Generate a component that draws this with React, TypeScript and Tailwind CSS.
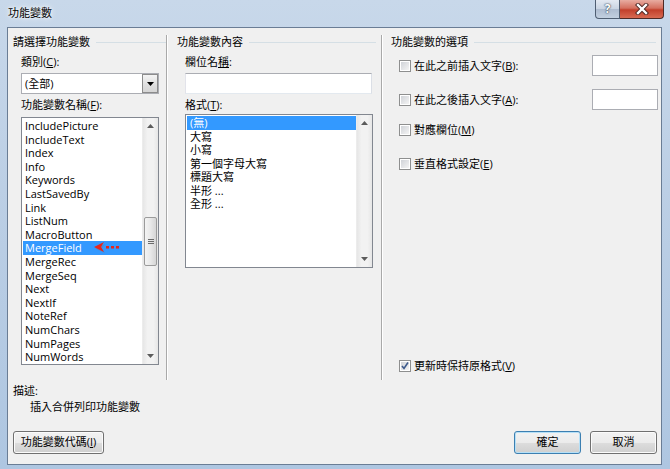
import React from "react";

const fields = [
  "IncludePicture",
  "IncludeText",
  "Index",
  "Info",
  "Keywords",
  "LastSavedBy",
  "Link",
  "ListNum",
  "MacroButton",
  "MergeField",
  "MergeRec",
  "MergeSeq",
  "Next",
  "NextIf",
  "NoteRef",
  "NumChars",
  "NumPages",
  "NumWords",
];

const formats = ["(無)", "大寫", "小寫", "第一個字母大寫", "標題大寫", "半形 ...", "全形 ..."];

function GroupHeader({ title, className = "" }: { title: string; className?: string }) {
  return (
    <div className={`flex items-center h-[14px] leading-[14px] ${className}`}>
      <span>{title}</span>
      <div className="flex-1 h-px bg-[#d5dfe5] ml-[6px]" />
    </div>
  );
}

function Arrow({ up }: { up?: boolean }) {
  return (
    <svg width="7" height="4" viewBox="0 0 7 4">
      <polygon points={up ? "0,4 7,4 3.5,0" : "0,0 7,0 3.5,4"} fill="#5c5c5c" />
    </svg>
  );
}

function ScrollBar({ thumbTop, thumbHeight }: { thumbTop?: number; thumbHeight?: number }) {
  return (
    <div className="w-[16px] h-full flex flex-col bg-[linear-gradient(to_right,#e6e6e6,#f2f2f2_30%,#f2f2f2_70%,#e6e6e6)] border-l border-[#ececec]">
      <div className="h-[16px] flex items-center justify-center">
        <Arrow up />
      </div>
      {thumbTop !== undefined && (
        <>
          <div style={{ height: thumbTop }} />
          <div
            className="mx-[1px] rounded-[2px] border border-[#9b9b9b] bg-[linear-gradient(to_right,#f4f4f4,#e8e8e8_50%,#d6d6d6)] flex flex-col items-center justify-center gap-[1px]"
            style={{ height: thumbHeight }}
          >
            <div className="w-[6px] h-px bg-[#6b6b6b]" />
            <div className="w-[6px] h-px bg-[#6b6b6b]" />
            <div className="w-[6px] h-px bg-[#6b6b6b]" />
          </div>
        </>
      )}
      <div className="flex-1" />
      <div className="h-[16px] flex items-center justify-center">
        <Arrow />
      </div>
    </div>
  );
}

function CheckBox({ checked }: { checked?: boolean }) {
  return (
    <div className="w-[12px] h-[12px] border border-[#8e8f8f] bg-white p-px shrink-0">
      <div className="w-full h-full bg-[linear-gradient(135deg,#d0d3d8,#f4f4f4)] relative">
        {checked && (
          <svg className="absolute -left-px -top-px" width="10" height="10" viewBox="0 0 10 10">
            <path d="M2 5 L4 7.5 L8 1.5" stroke="#3d5a8c" strokeWidth="1.6" fill="none" />
          </svg>
        )}
      </div>
    </div>
  );
}

function Button({ children, width, primary }: { children: React.ReactNode; width: string; primary?: boolean }) {
  return (
    <div
      className={`${width} h-[23px] rounded-[3px] border flex items-center justify-center bg-[linear-gradient(to_bottom,#f2f2f2_0%,#ebebeb_50%,#dddddd_51%,#cfcfcf_100%)] ${
        primary
          ? "border-[#3c7fb1] shadow-[inset_0_0_0_1px_#b6e0f7]"
          : "border-[#707070] shadow-[inset_0_0_0_1px_#fbfbfb]"
      }`}
    >
      {children}
    </div>
  );
}

export default function App() {
  return (
    <div className="w-[670px] h-[469px] overflow-hidden flex flex-col bg-[linear-gradient(to_bottom,#c8d8ea,#bccfe5_40%,#aec6e1)] text-[11px] text-black font-['Open_Sans','Noto_Sans_CJK_TC',sans-serif]">
      {/* Title bar */}
      <div className="h-[27px] flex justify-between shrink-0">
        <div className="pl-[8px] pt-[5px] leading-[16px] [text-shadow:0_0_6px_#fff,0_0_3px_#fff]">功能變數</div>
        <div className="flex pr-[6px]">
          <div className="w-[25px] h-[19px] border border-t-0 border-[#4f5e72] rounded-bl-[4px] bg-[linear-gradient(to_bottom,#e3e9f2,#c9d4e2_50%,#aebcd0_51%,#c2d0e0)] flex items-center justify-center text-white font-bold text-[12px] [text-shadow:0_0_2px_#2c3a4d,0_0_1px_#2c3a4d]">
            ?
          </div>
          <div className="w-[44px] h-[19px] border border-t-0 border-l-0 border-[#4e2a26] rounded-br-[4px] bg-[linear-gradient(to_bottom,#e8aca1,#d4705f_45%,#c2402c_55%,#d86a52)] flex items-center justify-center">
            <svg width="14" height="12" viewBox="0 0 14 12">
              <path d="M3 2 L11 10 M11 2 L3 10" stroke="#4a2420" strokeWidth="4.2" strokeLinecap="square" />
              <path d="M3 2 L11 10 M11 2 L3 10" stroke="#ffffff" strokeWidth="2.4" strokeLinecap="square" />
            </svg>
          </div>
        </div>
      </div>

      {/* Client area */}
      <div className="ml-[7px] mr-[8px] mb-[4px] flex-1 border border-[#6a7d95] bg-[#f0f0f0] flex flex-col">
        <div className="flex h-[352px] pt-[7px]">
          {/* Left column */}
          <div className="w-[158px] flex flex-col pl-[5px]">
            <GroupHeader title="請選擇功能變數" />
            <div className="pl-[8px] flex flex-col">
              <div className="mt-[6px] h-[14px] leading-[14px]">
                類別(<span className="underline">C</span>):
              </div>
              <div className="mt-[4px] w-[138px] h-[21px] border border-[#abadb3] bg-white flex items-center">
                <span className="pl-[3px] flex-1 leading-[14px]">(全部)</span>
                <div className="w-[16px] h-[19px] border border-[#8c8c8c] bg-[linear-gradient(to_bottom,#f4f4f4,#e1e1e1_50%,#d5d5d5)] flex items-center justify-center">
                  <svg width="7" height="4" viewBox="0 0 7 4">
                    <polygon points="0,0 7,0 3.5,4" fill="#000" />
                  </svg>
                </div>
              </div>
              <div className="mt-[4px] h-[14px] leading-[14px]">
                功能變數名稱(<span className="underline">F</span>):
              </div>
              <div className="mt-[5px] w-[138px] h-[248px] border border-[#828790] bg-white flex">
                <div className="flex-1 pt-px pl-px">
                  {fields.map((f) => (
                    <div
                      key={f}
                      className={`relative h-[13.6px] leading-[13.6px] pl-[2px] ${
                        f === "MergeField" ? "bg-[#3399ff] text-white" : ""
                      }`}
                    >
                      {f}
                      {f === "MergeField" && (
                        <svg className="absolute left-[70px] -top-[1px]" width="28" height="16" viewBox="0 0 28 16">
                          <polygon points="2,8.5 12,4 9,8.5 12,13" fill="#6b7a99" opacity="0.45" />
                          <polygon points="1,7 11,2 8,7 11,12" fill="#e8251b" />
                          <rect x="13" y="6" width="3" height="2.5" fill="#e8251b" />
                          <rect x="18" y="6" width="3" height="2.5" fill="#e8251b" />
                          <rect x="23" y="6" width="3" height="2.5" fill="#e8251b" />
                        </svg>
                      )}
                    </div>
                  ))}
                </div>
                <ScrollBar thumbTop={83} thumbHeight={49} />
              </div>
            </div>
          </div>

          {/* separator */}
          <div className="w-px bg-[#a9a9a9]" />
          <div className="w-px bg-white" />

          {/* Middle column */}
          <div className="w-[213px] flex flex-col pl-[9px] pr-[5px]">
            <GroupHeader title="功能變數內容" />
            <div className="pl-[8px] flex flex-col">
              <div className="mt-[6px] h-[14px] leading-[14px]">
                欄位名<span className="underline">稱</span>:
              </div>
              <div className="mt-[4px] w-[187px] h-[21px] border border-[#abadb3] border-l-[#e2e3ea] border-r-[#dbdfe6] border-b-[#e3e9ef] bg-white" />
              <div className="mt-[4px] h-[14px] leading-[14px]">
                格式(<span className="underline">T</span>):
              </div>
              <div className="mt-[2px] w-[188px] h-[154px] border border-[#828790] bg-white flex">
                <div className="flex-1 pt-px pl-px">
                  {formats.map((f, i) => (
                    <div
                      key={f}
                      className={`h-[13.5px] leading-[13.5px] pl-[3px] ${i === 0 ? "bg-[#3399ff] text-white" : ""}`}
                    >
                      {f}
                    </div>
                  ))}
                </div>
                <ScrollBar />
              </div>
            </div>
          </div>

          {/* separator */}
          <div className="w-px bg-[#a9a9a9]" />
          <div className="w-px bg-white" />

          {/* Right column */}
          <div className="flex-1 flex flex-col pl-[8px] pr-[3px]">
            <GroupHeader title="功能變數的選項" className="mr-[2px]" />
            <div className="mt-[6px] h-[21px] flex items-center justify-between pl-[8px]">
              <div className="flex items-center gap-[3px]">
                <CheckBox />
                <span className="leading-[14px]">
                  在此之前插入文字(<span className="underline">B</span>):
                </span>
              </div>
              <div className="w-[66px] h-[21px] border border-[#abadb3] bg-white" />
            </div>
            <div className="mt-[13px] h-[21px] flex items-center justify-between pl-[8px]">
              <div className="flex items-center gap-[3px]">
                <CheckBox />
                <span className="leading-[14px]">
                  在此之後插入文字(<span className="underline">A</span>):
                </span>
              </div>
              <div className="w-[66px] h-[21px] border border-[#abadb3] bg-white" />
            </div>
            <div className="mt-[13px] h-[14px] flex items-center gap-[3px] pl-[8px]">
              <CheckBox />
              <span className="leading-[14px]">
                對應欄位(<span className="underline">M</span>)
              </span>
            </div>
            <div className="mt-[20px] h-[14px] flex items-center gap-[3px] pl-[8px]">
              <CheckBox />
              <span className="leading-[14px]">
                垂直格式設定(<span className="underline">E</span>)
              </span>
            </div>
            <div className="mt-auto mb-[7px] h-[14px] flex items-center gap-[3px] pl-[8px]">
              <CheckBox checked />
              <span className="leading-[14px]">
                更新時保持原格式(<span className="underline">V</span>)
              </span>
            </div>
          </div>
        </div>

        {/* Bottom */}
        <div className="flex-1 flex flex-col pl-[5px] pr-[4px]">
          <div className="mt-[4px] h-[14px] leading-[14px]">描述:</div>
          <div className="mt-[2px] h-[14px] leading-[14px] pl-[17px]">插入合併列印功能變數</div>
          <div className="mt-[17px] flex items-center">
            <Button width="w-[91px]">
              功能變數代碼(<span className="underline">I</span>)
            </Button>
            <div className="flex-1" />
            <Button width="w-[67px]" primary>
              確定
            </Button>
            <div className="w-[9px]" />
            <Button width="w-[67px]">取消</Button>
          </div>
        </div>
      </div>
    </div>
  );
}
